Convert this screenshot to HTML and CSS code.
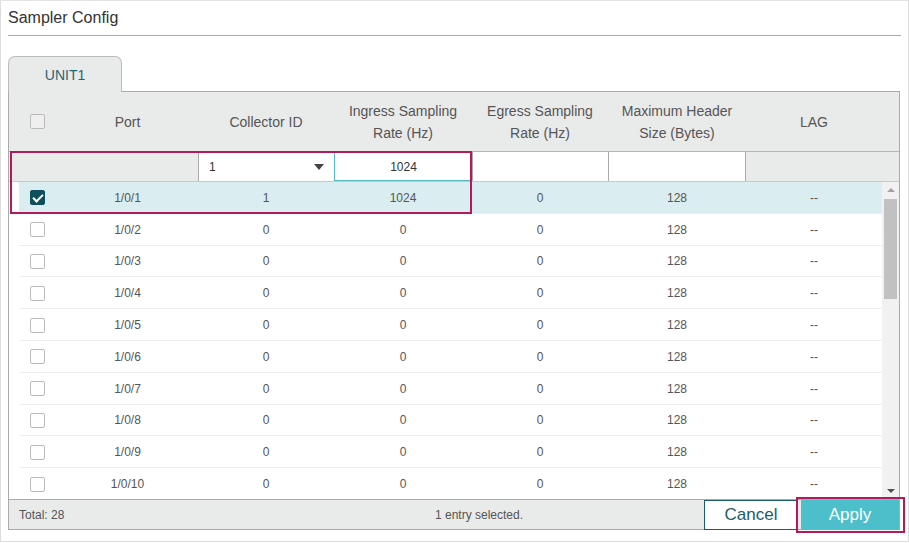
FILE: index.html
```html
<!DOCTYPE html>
<html lang="en">
<head>
  <meta charset="UTF-8">
  <title>Sampler Config</title>
  <link rel="stylesheet" href="styles.css">
</head>
<body>
  <div class="panel">
    <div class="panel-title">Sampler Config</div>
    <div class="tabs">
      <div class="tab active">UNIT1</div>
    </div>
    <div class="grid-box">
      <div class="grid-head">
        <div class="cell chk"><span class="cbox"></span></div>
        <div class="cell">Port</div>
        <div class="cell">Collector ID</div>
        <div class="cell">Ingress Sampling<br>Rate (Hz)</div>
        <div class="cell">Egress Sampling<br>Rate (Hz)</div>
        <div class="cell">Maximum Header<br>Size (Bytes)</div>
        <div class="cell">LAG</div>
        <div class="cell"></div>
      </div>
      <div class="edit-row">
        <div class="cell"></div>
        <div class="cell"></div>
        <div class="cell field select">1<span class="caret"></span></div>
        <div class="cell field focus">1024</div>
        <div class="cell field"></div>
        <div class="cell field"></div>
        <div class="cell"></div>
        <div class="cell"></div>
      </div>
      <div class="grid-body">
        <div class="rows" id="rows"></div>
        <div class="scrollbar">
          <span class="arrow up"></span>
          <span class="thumb"></span>
          <span class="arrow down"></span>
        </div>
        <div class="mark mark-edit"></div>
      </div>
      <div class="grid-foot">
        <div class="total">Total: 28</div>
        <div class="selected">1 entry selected.</div>
        <button class="btn btn-cancel">Cancel</button>
        <button class="btn btn-apply">Apply</button>
        <div class="mark mark-apply"></div>
      </div>
    </div>
  </div>
  <script>
    var rows = document.getElementById('rows');
    for (var i = 1; i <= 10; i++) {
      var sel = i === 1;
      var r = document.createElement('div');
      r.className = 'row' + (sel ? ' selected-row' : '');
      r.innerHTML =
        '<div class="cell chk"><span class="cbox' + (sel ? ' checked' : '') + '"></span></div>' +
        '<div class="cell">1/0/' + i + '</div>' +
        '<div class="cell">' + (sel ? '1' : '0') + '</div>' +
        '<div class="cell">' + (sel ? '1024' : '0') + '</div>' +
        '<div class="cell">0</div>' +
        '<div class="cell">128</div>' +
        '<div class="cell">--</div>';
      rows.appendChild(r);
    }
  </script>
</body>
</html>
```

FILE: styles.css
```css
body {
  margin: 0;
  font-family: 'Liberation Sans', Arial, sans-serif;
  color: #555;
  background: #fff;
}
.panel {
  width: 909px;
  height: 542px;
  box-sizing: border-box;
  border: 1px solid #ddd;
  border-top-color: #e4e4e4;
  padding: 0 7px;
}
.panel-title {
  font-size: 16px;
  color: #333;
  height: 34px;
  line-height: 33px;
  border-bottom: 1px solid #aaa;
}
.tabs {
  display: flex;
  margin-top: 20px;
  height: 36px;
}
.tab {
  width: 114px;
  box-sizing: border-box;
  border: 1px solid #bbb;
  border-bottom: none;
  border-radius: 7px 7px 0 0;
  background: #e9ebea;
  color: #1f6674;
  font-size: 14px;
  text-align: center;
  line-height: 36px;
  position: relative;
  z-index: 1;
}
.grid-box {
  width: 892px;
  box-sizing: border-box;
  border: 1px solid #aaa;
  margin-top: -1px;
}
.grid-head, .edit-row, .row {
  display: grid;
  grid-template-columns: 48px 141px 136px 138px 136px 138px 136px 17px;
}
.grid-head {
  height: 60px;
  background: #e9eaea;
  font-size: 14px;
  line-height: 22px;
  border-bottom: 1px solid #b5b5b5;
  box-sizing: border-box;
}
.cell {
  display: flex;
  align-items: center;
  justify-content: center;
  text-align: center;
}
.grid-head .chk {
  justify-content: flex-start;
  padding-left: 21px;
}
.cbox {
  width: 13px;
  height: 13px;
  border: 1px solid #bbb;
  border-radius: 2px;
  background: #fff;
  display: inline-block;
  position: relative;
}
.grid-head .cbox {
  background: #efefef;
}
.cbox.checked {
  background: #0e4f5b;
  border-color: #0e4f5b;
}
.cbox.checked:after {
  content: "";
  position: absolute;
  left: 4px;
  top: 1px;
  width: 4px;
  height: 8px;
  border: solid #fff;
  border-width: 0 2px 2px 0;
  transform: rotate(45deg);
}
.edit-row {
  height: 30px;
  background: #e9eaea;
  border-bottom: 1px solid #c8c8c8;
  box-sizing: border-box;
  font-size: 12px;
  color: #333;
}
.edit-row .field {
  background: #fff;
  border-left: 1px solid #aaa;
}
.edit-row .field:nth-child(6) {
  border-right: 1px solid #aaa;
}
.edit-row .select {
  justify-content: space-between;
  padding: 0 10px 0 10px;
}
.caret {
  width: 0;
  height: 0;
  border-left: 5px solid transparent;
  border-right: 5px solid transparent;
  border-top: 6px solid #444;
}
.edit-row .focus {
  border-left: 1px solid #58b9c4;
  box-shadow: inset 0 -1px 0 #58b9c4;
}
.grid-body {
  display: flex;
  height: 317px;
  position: relative;
}
.rows {
  flex: 1;
  padding-left: 10px;
  overflow: hidden;
}
.row {
  grid-template-columns: 38px 141px 136px 138px 136px 138px 136px;
  height: 31.8px;
  box-sizing: border-box;
  border-bottom: 1px solid #eee;
  font-size: 12px;
  padding-top: 1px;
}
.row .chk {
  justify-content: flex-start;
  padding-left: 11px;
}
.selected-row {
  background: #daedf0;
}
.scrollbar {
  width: 17px;
  background: #f1f1f1;
  position: relative;
}
.thumb {
  position: absolute;
  left: 2px;
  right: 2px;
  top: 17px;
  height: 100px;
  background: #c1c1c1;
}
.arrow {
  position: absolute;
  left: 5px;
  width: 0;
  height: 0;
  border-left: 4px solid transparent;
  border-right: 4px solid transparent;
}
.arrow.up {
  top: 6px;
  border-bottom: 4px solid #a3a3a3;
}
.arrow.down {
  bottom: 6px;
  border-top: 4px solid #505050;
}
.grid-foot {
  height: 30px;
  display: flex;
  align-items: center;
  background: #e9eaea;
  border-top: 1px solid #aaa;
  box-sizing: border-box;
  font-size: 12px;
  position: relative;
}
.total {
  padding-left: 10px;
  width: 330px;
}
.selected {
  flex: 1;
  padding-left: 86px;
}
.btn {
  font-family: 'Liberation Sans', Arial, sans-serif;
  font-size: 17px;
  height: 30px;
  margin-top: 1px;
  box-sizing: border-box;
  cursor: pointer;
}
.btn-cancel {
  width: 94px;
  background: #fff;
  color: #1c5c67;
  border: 1px solid #1c5c67;
  margin-right: 3px;
}
.btn-apply {
  width: 98px;
  background: #4cbfca;
  color: #fff;
  border: none;
  margin-right: 0;
}
.mark {
  position: absolute;
  border: 2px solid #b31a5b;
  pointer-events: none;
}
.mark-edit {
  left: 1px;
  top: -31px;
  width: 458px;
  height: 59px;
}
.mark-apply {
  right: -6px;
  top: -3px;
  width: 105px;
  height: 32px;
}
```
